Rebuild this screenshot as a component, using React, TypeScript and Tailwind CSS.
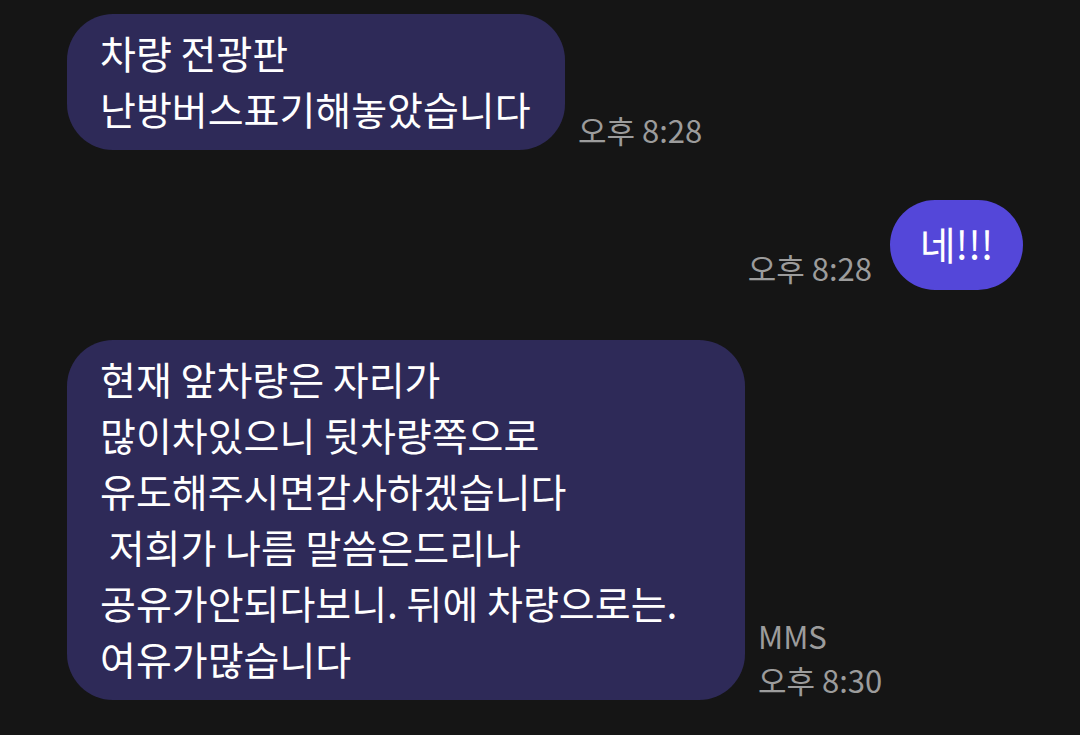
import React from "react";

const font = "font-['Noto_Sans_CJK_KR','Noto_Sans',sans-serif]";

function Time({ children }: { children: React.ReactNode }) {
  return <div className="text-[31px] leading-[44px] text-[#9c9c9c] whitespace-nowrap">{children}</div>;
}

export default function App() {
  return (
    <div className={`w-[1080px] h-[735px] bg-[#151515] overflow-hidden ${font}`}>
      <div className="flex flex-col pt-[14px]">
        <div className="flex items-end gap-[13px] pl-[67px]">
          <div className="w-[498px] rounded-[46px] bg-[#2e2a58] px-[33px] pt-[10px] pb-[14px] text-[39px] leading-[56px] text-white whitespace-pre">
            {"차량 전광판\n난방버스표기해놓았습니다"}
          </div>
          <div className="mb-[-2px]">
            <Time>오후 8:28</Time>
          </div>
        </div>

        <div className="mt-[50px] flex items-end justify-end gap-[18px] pr-[57px]">
          <div className="mb-[0px]">
            <Time>오후 8:28</Time>
          </div>
          <div className="w-[133px] rounded-full bg-[#5447d9] pt-[15px] pb-[19px] text-center text-[39px] leading-[56px] text-white whitespace-pre">
            네!!!
          </div>
        </div>

        <div className="mt-[50px] flex items-end gap-[13px] pl-[67px]">
          <div className="w-[678px] rounded-[46px] bg-[#2e2a58] px-[33px] pt-[10px] pb-[14px] text-[39px] leading-[56px] text-white whitespace-pre">
            {"현재 앞차량은 자리가\n많이차있으니 뒷차량쪽으로\n유도해주시면감사하겠습니다\n 저희가 나름 말씀은드리나\n공유가안되다보니. 뒤에 차량으로는.\n여유가많습니다"}
          </div>
          <div className="mb-[-2px]">
            <Time>MMS</Time>
            <Time>오후 8:30</Time>
          </div>
        </div>
      </div>
    </div>
  );
}
